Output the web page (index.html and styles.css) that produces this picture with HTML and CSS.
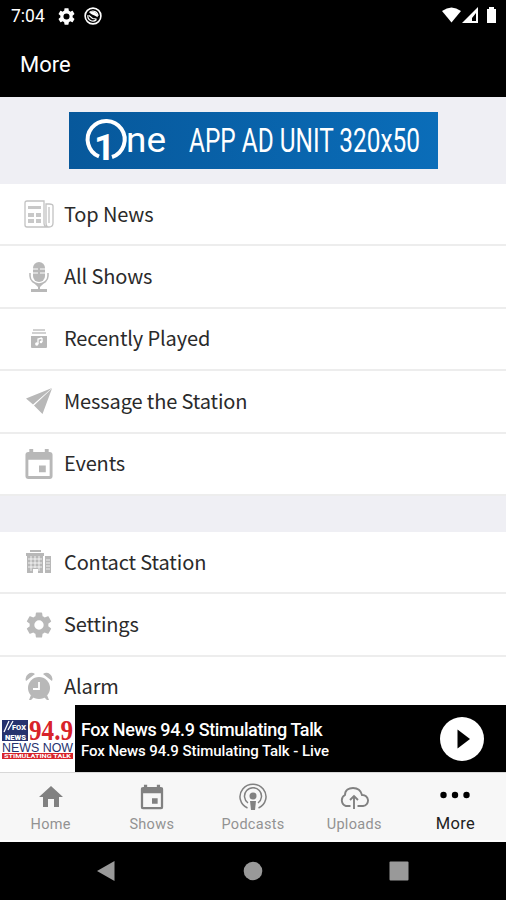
FILE: index.html
```html
<!DOCTYPE html>
<html lang="en">
<head>
    <meta charset="UTF-8">
    <title>More</title>
    <link rel="stylesheet" href="styles.css">
</head>
<body>
    <!-- shared shapes -->
    <svg class="defs" width="0" height="0">
        <symbol id="calendar" viewBox="0 0 28 31">
            <path fill-rule="evenodd" d="M4 0h4v3h12V0h4v3h1a3 3 0 0 1 3 3v22a3 3 0 0 1-3 3H3a3 3 0 0 1-3-3V6a3 3 0 0 1 3-3h1zM3 11v17h22V11zM14 17h7v7h-7z"/>
        </symbol>
        <symbol id="gear" viewBox="2 2 20 20">
            <path d="M19.14 12.94c.04-.3.06-.61.06-.94 0-.32-.02-.64-.07-.94l2.03-1.58c.18-.14.23-.41.12-.61l-1.92-3.32c-.12-.22-.37-.29-.59-.22l-2.39.96c-.5-.38-1.03-.7-1.62-.94l-.36-2.54c-.04-.24-.24-.41-.48-.41h-3.84c-.24 0-.43.17-.47.41l-.36 2.54c-.59.24-1.13.57-1.62.94l-2.39-.96c-.22-.08-.47 0-.59.22L2.74 8.87c-.12.21-.08.47.12.61l2.03 1.58c-.05.3-.09.63-.09.94s.02.64.07.94l-2.03 1.58c-.18.14-.23.41-.12.61l1.92 3.32c.12.22.37.29.59.22l2.39-.96c.5.38 1.03.7 1.62.94l.36 2.54c.05.24.24.41.48.41h3.84c.24 0 .44-.17.47-.41l.36-2.54c.59-.24 1.13-.56 1.62-.94l2.39.96c.22.08.47 0 .59-.22l1.92-3.32c.12-.22.07-.47-.12-.61zM12 15.6A3.6 3.6 0 1 1 12 8.400a3.6 3.6 0 0 1 0 7.2z"/>
        </symbol>
    </svg>

    <div class="status-bar">
        <span class="time">7:04</span>
        <svg class="status-gear" width="17" height="17"><use href="#gear"/></svg>
        <svg class="status-app" width="18" height="18" viewBox="0 0 18 18">
            <circle cx="9" cy="9" r="7.900" fill="none" stroke="#fff" stroke-width="1.600"/>
            <path d="M5.500 5.800a5 5 0 0 1 8.200 4.500L10.500 8.500 8 7.500z" fill="#fff"/>
            <path d="M4 8a5 5 0 0 0 8.500 4.500M5 8.500l3.500 3 4 .5M5.500 5.500A5 5 0 0 1 14 9" fill="none" stroke="#fff" stroke-width="1.200"/>
        </svg>
        <svg class="signals" width="56" height="18" viewBox="0 0 56 18">
            <path d="M0 4Q9.500-3 19 4L9.500 15.500z"/>
            <path fill-rule="evenodd" d="M36 0v16H20zM34 6l-4 5v3h4z"/>
            <path d="M45 2h2V0h5v2h2v14h-9z"/>
        </svg>
    </div>
    <div class="header">More</div>

    <div class="content">
        <div class="ad">
            <svg width="369" height="57" viewBox="0 0 369 57">
                <path d="M30 44.500A18.500 18.500 0 1 1 43 45" fill="none" stroke="#fff" stroke-width="4"/>
                <text class="ad-one" x="25" y="48">1</text>
                <text class="ad-ne" x="57" y="40" textLength="40" lengthAdjust="spacingAndGlyphs">ne</text>
                <text class="ad-text" x="120" y="40" textLength="231" lengthAdjust="spacingAndGlyphs">APP AD UNIT 320x50</text>
            </svg>
        </div>

        <div class="menu">
            <div class="row">
                <svg class="icon" viewBox="0 0 30 30">
                    <path d="M20 24V2H3Q1 2 1 4v22q0 2 2 2h22q4 0 4-4V7q0-2-4-2h-3v19q0 4 3 4M25 8v16M20 24q0 4 4 4" fill="none" stroke="#c2c2c2" stroke-width="1.300"/>
                    <path d="M4 7h13v3H4zM4 14h6v4H4zM12 14h5v4h-5zM4 20h6v4H4zM12 20h5v4h-5z" fill="#c8c8c8"/>
                </svg>
                <span>Top News</span>
            </div>
            <div class="row">
                <svg class="icon" viewBox="0 0 30 30">
                    <rect x="9" y="0" width="12" height="20" rx="6"/>
                    <path d="M9 7h5M16 7h5M9 11h5M16 11h5" stroke="#fff" stroke-width="1"/>
                    <path d="M6 11v3a9 8 0 0 0 18 0v-3" fill="none" stroke="#b8b8b8" stroke-width="1.500"/>
                    <path d="M11 22h8l-3 3v2h7v3H7v-3h7v-2z"/>
                </svg>
                <span>All Shows</span>
            </div>
            <div class="row">
                <svg class="icon" viewBox="0 0 30 30">
                    <path opacity=".65" d="M9 5h12v2H9zM8 8h14v2H8z"/>
                    <path d="M7 12h16v11q0 1-1 1H8q-1 0-1-1z"/>
                    <path d="M18 14l-4 1v5M18 14v4" fill="none" stroke="#fff" stroke-width="1.300"/>
                    <circle cx="12.800" cy="20" r="1.700" fill="#fff"/>
                    <circle cx="17" cy="18" r="1.300" fill="#fff"/>
                </svg>
                <span>Recently Played</span>
            </div>
            <div class="row">
                <svg class="icon" viewBox="0 0 30 30">
                    <path d="M28 2L2 12.500l7 6zM28 2.500L10 19.500 18.500 28z"/>
                </svg>
                <span>Message the Station</span>
            </div>
            <div class="row">
                <svg class="icon"><use href="#calendar"/></svg>
                <span>Events</span>
            </div>
        </div>

        <div class="menu">
            <div class="row">
                <svg class="icon" viewBox="0 0 30 30">
                    <path d="M6 3h11v2H6zM2 6h18v3H2zM3 9h16v17h-5v-4H9v4H3zM21 9h6v3h-6zM21 12h6v14h-6z"/>
                    <path d="M4 12h14M4 16h14M4 20h14M7 9v15M11 9v12M15 9v15M22 13h4M22 16h4M22 19h4M22 22h4" stroke="#fff" stroke-width=".8"/>
                </svg>
                <span>Contact Station</span>
            </div>
            <div class="row">
                <svg class="icon small" viewBox="0 0 26 26"><use href="#gear"/></svg>
                <span>Settings</span>
            </div>
            <div class="row">
                <svg class="icon" viewBox="0 0 30 30">
                    <path d="M2 9a6 6 0 0 1 9-7zM19 2a6 6 0 0 1 9 7zM7 23l3 2-3 3H5zM23 23l-3 2 3 3h2z"/>
                    <circle cx="15" cy="16" r="11"/>
                    <path d="M15 10v7H9" fill="none" stroke="#fff" stroke-width="1.800"/>
                </svg>
                <span>Alarm</span>
            </div>
        </div>
    </div>

    <div class="player">
        <svg class="cover" width="75" height="67" viewBox="0 0 75 67">
            <path d="M2 15h26v21H2z" fill="#26326e"/>
            <path d="M4 27l5-11M8 25l5-9" stroke="#fff" stroke-width="1.300"/>
            <text class="logo-fox" x="12" y="25" textLength="14" lengthAdjust="spacingAndGlyphs">FOX</text>
            <text class="logo-fox" x="5" y="34.500" textLength="21" lengthAdjust="spacingAndGlyphs">NEWS</text>
            <text class="logo-num" x="29" y="35" textLength="44" lengthAdjust="spacingAndGlyphs">94.9</text>
            <text class="logo-now" x="2" y="46.500" textLength="71" lengthAdjust="spacingAndGlyphs">NEWS NOW</text>
            <path d="M2 48h71v6H2z" fill="#d8232a"/>
            <text class="logo-tag" x="4" y="53" textLength="67" lengthAdjust="spacingAndGlyphs">STIMULATING TALK</text>
        </svg>
        <div class="track">
            <div class="title">Fox News 94.9 Stimulating Talk</div>
            <div class="subtitle">Fox News 94.9 Stimulating Talk - Live</div>
        </div>
        <svg class="play" width="44" height="44" viewBox="0 0 44 44">
            <circle cx="22" cy="22" r="22" fill="#fff"/>
            <path d="M17.500 12.500v19L30 22z"/>
        </svg>
    </div>

    <div class="tabs">
        <div class="tab">
            <svg viewBox="0 0 30 30"><path d="M15 4l12 11h-4v10h-5v-8h-6v8H7V15H3z"/></svg>
            <span>Home</span>
        </div>
        <div class="tab">
            <svg viewBox="0 0 30 30"><use href="#calendar" x="3.500" y="2.500" width="23" height="25"/></svg>
            <span>Shows</span>
        </div>
        <div class="tab">
            <svg viewBox="0 0 30 30">
                <path d="M9.500 26a13 12.500 0 1 1 11 0M10 21a8.500 8.500 0 1 1 10 0" fill="none" stroke="#818181" stroke-width="1.500"/>
                <circle cx="15" cy="14" r="3.500"/>
                <path d="M12 19h6l-1 9h-4z"/>
            </svg>
            <span>Podcasts</span>
        </div>
        <div class="tab">
            <svg viewBox="0 0 30 30">
                <path d="M11.500 24H7a6 6 0 0 1-1-11C6 8 10 6 14 6c5 0 8 3 9 7a5.500 5.500 0 0 1 1 11h-5.500M15 27V15M11 18l4-4 4 4" fill="none" stroke="#818181" stroke-width="1.900"/>
            </svg>
            <span>Uploads</span>
        </div>
        <div class="tab active">
            <svg viewBox="0 0 30 30"><circle cx="3.500" cy="13" r="3.200"/><circle cx="15" cy="13" r="3.200"/><circle cx="26.500" cy="13" r="3.200"/></svg>
            <span>More</span>
        </div>
    </div>

    <div class="nav-bar">
        <svg width="20" height="22" viewBox="0 0 20 22"><path d="M18.500 1v20L1 11z"/></svg>
        <svg width="20" height="20" viewBox="0 0 20 20"><circle cx="10" cy="10" r="9.300"/></svg>
        <svg width="20" height="20" viewBox="0 0 20 20"><rect x=".5" y=".5" width="19" height="19" rx="1"/></svg>
    </div>
</body>
</html>
```
FILE: styles.css
```css
* {
    box-sizing: border-box;
}

body {
    display: flex;
    flex-direction: column;
    width: 506px;
    height: 900px;
    margin: 0;
    background: #000;
    font-family: Roboto, sans-serif;
    overflow: hidden;
}

svg {
    display: block;
    flex: none;
}

.defs {
    display: none;
}

.status-bar {
    display: flex;
    align-items: center;
    flex: none;
    height: 32px;
    padding: 0 8px 0 11px;
    color: #fff;
    fill: #fff;
}

.time {
    width: 47px;
    font-size: 17.5px;
}

.status-app {
    margin-left: 9px;
}

.signals {
    margin-left: auto;
}

.header {
    flex: none;
    height: 65px;
    padding-left: 20px;
    color: #fff;
    font-size: 22px;
    line-height: 66px;
}

.content {
    flex: none;
    height: 608px;
    background: #efeff4;
    overflow: hidden;
}

.ad {
    height: 87px;
    padding: 15px 0 0 69px;
}

.ad svg {
    background: linear-gradient(90deg, #07589b, #0a6db9);
}

.ad svg text {
    fill: #fff;
}

.ad-one {
    font-size: 37px;
    font-weight: 700;
}

.ad-ne {
    font-size: 35px;
    font-weight: 400;
}

.ad-text {
    font-size: 33px;
}

.menu {
    margin-bottom: 36px;
}

.row {
    display: flex;
    align-items: center;
    height: 62.4px;
    padding-left: 24px;
    border-bottom: 2px solid #ededed;
    background: #fff;
    color: #2a2a2a;
    font-family: "Noto Sans CJK SC", sans-serif;
    font-size: 20px;
    font-weight: 400;
    letter-spacing: -0.13px;
}

.row span {
    padding-bottom: 2px;
}

.icon {
    width: 30px;
    height: 30px;
    margin-right: 10px;
    fill: #b8b8b8;
}

.icon.small {
    width: 26px;
    height: 26px;
    margin: 0 12px 0 2px;
}

.player {
    display: flex;
    align-items: center;
    flex: none;
    height: 67px;
    padding-right: 22px;
    background: #000;
}

.cover {
    background: #fff;
}

.logo-fox {
    fill: #fff;
    font-size: 8px;
    font-weight: 900;
}

.logo-num {
    fill: #d8232a;
    font-family: "Liberation Serif", serif;
    font-size: 29px;
    font-weight: bold;
}

.logo-now {
    fill: #26326e;
    font-family: "Liberation Sans", sans-serif;
    font-size: 12px;
}

.logo-tag {
    fill: #fff;
    font-size: 5px;
    font-weight: bold;
}

.track {
    flex: 1;
    padding: 2px 0 0 6px;
    color: #fff;
    white-space: nowrap;
}

.title {
    font-size: 18px;
    font-weight: 500;
    line-height: 23px;
    letter-spacing: -0.38px;
}

.subtitle {
    font-size: 15px;
    font-weight: 500;
    line-height: 21px;
    letter-spacing: -0.07px;
}

.tabs {
    display: flex;
    flex: none;
    height: 70px;
    border-top: 1px solid #d8d8d8;
    border-bottom: 2px solid #fff;
    background: #f7f7f7;
}

.tab {
    display: flex;
    flex: 1;
    flex-direction: column;
    align-items: center;
    padding-top: 9px;
    color: #929292;
    fill: #818181;
    font-size: 14.5px;
    line-height: 22px;
    letter-spacing: 0.3px;
}

.tab svg {
    width: 30px;
    height: 30px;
    margin-bottom: 2px;
}

.tab.active {
    color: #222;
    fill: #000;
    font-size: 16.5px;
    line-height: 20px;
}

.nav-bar {
    display: flex;
    align-items: center;
    justify-content: space-between;
    flex: 1;
    padding: 0 97px 0 96px;
    fill: #999;
}
```
